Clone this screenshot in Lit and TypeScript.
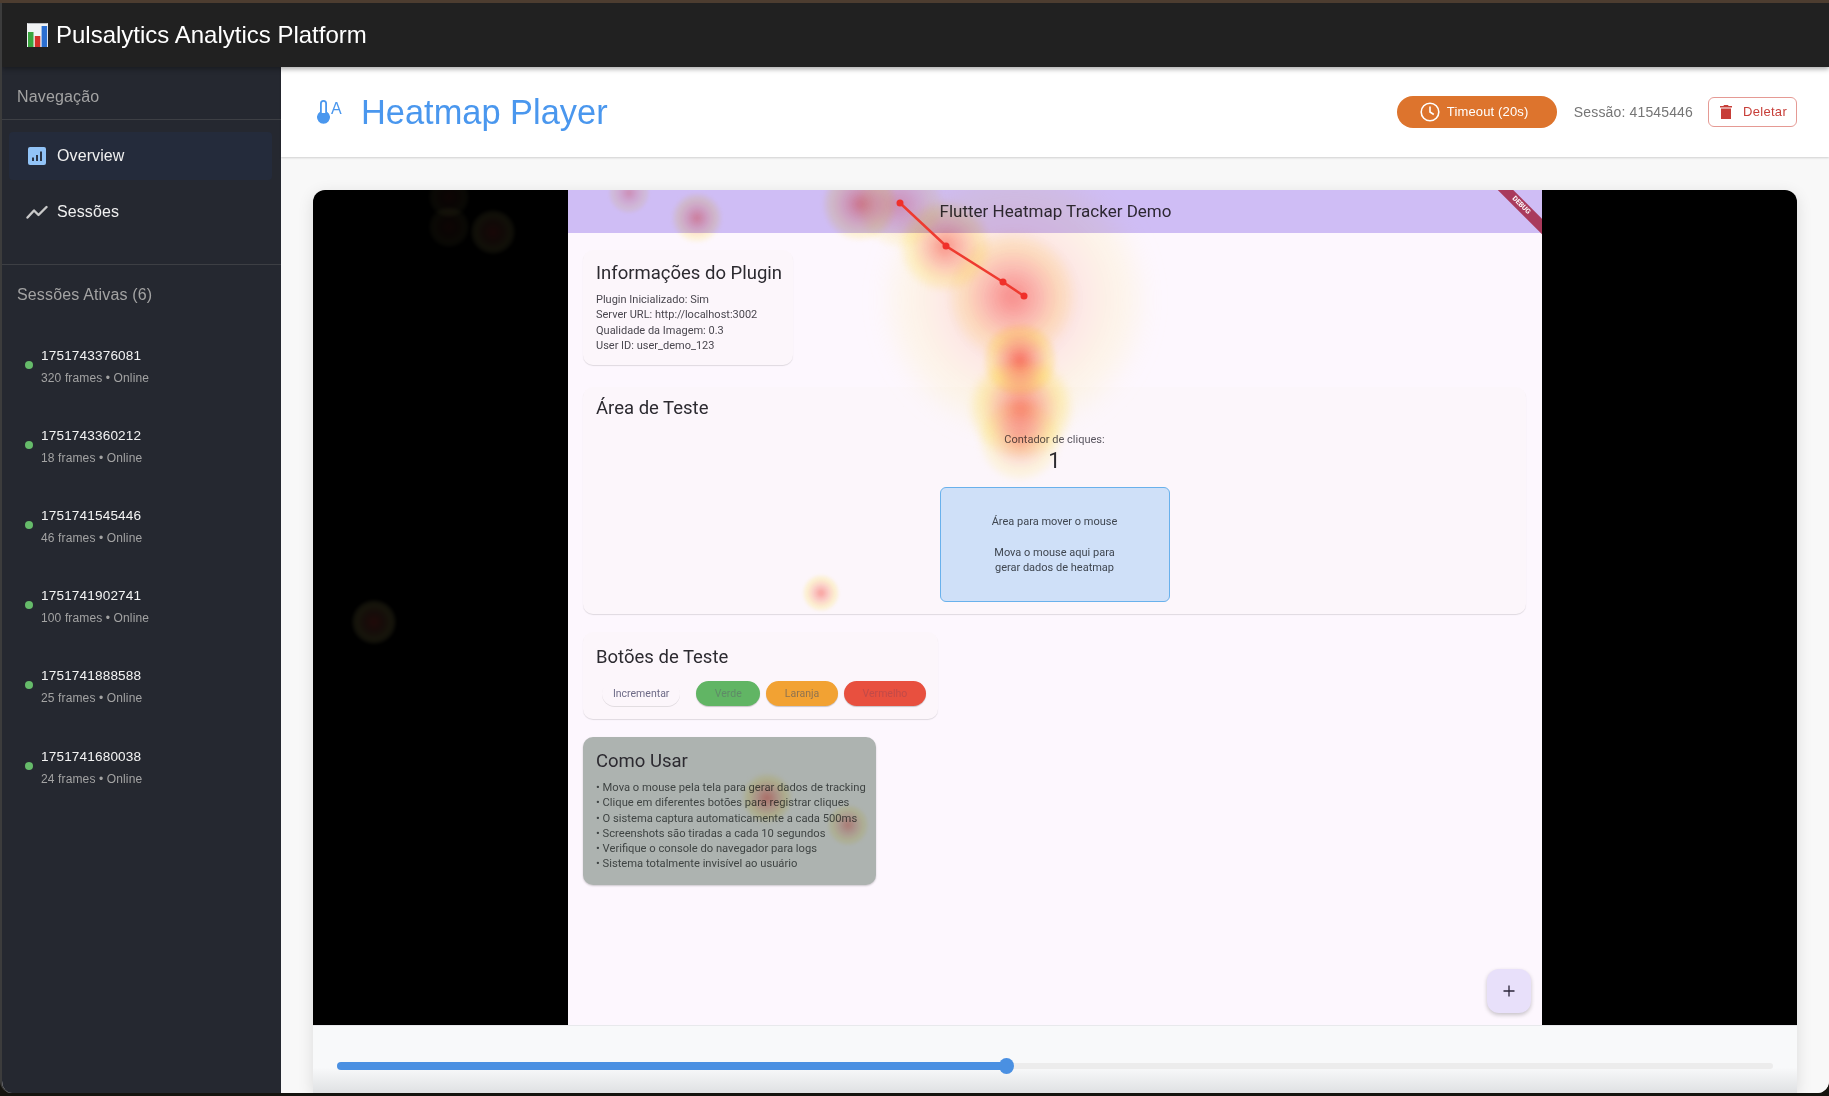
import { LitElement, css, html, svg } from "lit";
import { customElement } from "lit/decorators.js";

const SESSIONS = [
  { id: "1751743376081", frames: 320 },
  { id: "1751743360212", frames: 18 },
  { id: "1751741545446", frames: 46 },
  { id: "1751741902741", frames: 100 },
  { id: "1751741888588", frames: 25 },
  { id: "1751741680038", frames: 24 },
];

const HOW_TO = [
  "Mova o mouse pela tela para gerar dados de tracking",
  "Clique em diferentes botões para registrar cliques",
  "O sistema captura automaticamente a cada 500ms",
  "Screenshots são tiradas a cada 10 segundos",
  "Verifique o console do navegador para logs",
  "Sistema totalmente invisível ao usuário",
];

// heat spots, in page coordinates: x, y, radius, opacity
const SPOTS = [
  [449, 197, 20, 0.07],
  [449, 227, 20, 0.07],
  [493, 232, 22, 0.12],
  [374, 622, 22, 0.16],
  [629, 193, 20, 0.45],
  [697, 218, 24, 0.65],
  [860, 204, 36, 0.7],
  [900, 205, 42, 0.45],
  [945, 246, 44, 0.7],
  [1015, 300, 130, 0.32],
  [1012, 296, 62, 0.6],
  [1020, 360, 36, 0.9],
  [1021, 408, 50, 0.85],
  [1020, 440, 40, 0.45],
  [821, 593, 18, 0.65],
  [767, 798, 24, 0.75],
  [848, 825, 20, 0.6],
];

const ROUTE = [
  [900, 203],
  [946, 246],
  [1003, 282],
  [1024, 296],
];

const STAGE_X = 313;
const STAGE_Y = 190;
const FRAME_LEFT = 568;

@customElement("app-root")
export class AppRoot extends LitElement {
  static styles = css`
    :host {
      display: flex;
      flex-direction: column;
      width: 1829px;
      height: 1096px;
      background: #15140f;
      font-family: "Liberation Sans", Arial, sans-serif;
    }
    .top-strip {
      height: 3px;
      flex: none;
      background: #4d3d30;
    }
    .window {
      flex: none;
      height: 1090px;
      display: flex;
      flex-direction: column;
      overflow: hidden;
      border-radius: 0 0 12px 12px;
      border-left: 2px solid #3c3c3c;
      background: #f2f2f2;
    }
    .appbar {
      flex: none;
      height: 64px;
      display: flex;
      align-items: center;
      gap: 8px;
      padding-left: 25px;
      background: #212121;
      color: #fff;
      font-size: 24px;
      position: relative;
      z-index: 2;
      box-shadow: 0 2px 5px rgba(0, 0, 0, 0.35);
    }
    .shell {
      flex: 1;
      min-height: 0;
      display: flex;
    }
    .sidebar {
      flex: none;
      width: 279px;
      background: #252830;
      color: #fff;
    }
    .side-title {
      height: 53px;
      box-sizing: border-box;
      padding: 21px 0 0 15px;
      font-size: 16px;
      letter-spacing: 0.15px;
      line-height: 18px;
      color: #a3a3a3;
      border-bottom: 1px solid #3d3f44;
    }
    .nav {
      height: 145px;
      box-sizing: border-box;
      padding: 12px 9px 0 7px;
      border-bottom: 1px solid #3d3f44;
    }
    .nav-item {
      height: 48px;
      display: flex;
      align-items: center;
      gap: 9px;
      padding-left: 17px;
      border-radius: 4px;
      font-size: 16px;
      letter-spacing: 0.1px;
      color: #f0f0f0;
    }
    .nav-item.active {
      background: #242b3b;
      padding-left: 19px;
      gap: 11px;
    }
    .nav-gap {
      height: 8px;
    }
    .side-title.plain {
      border: 0;
      height: 61px;
    }
    .session {
      height: 80.2px;
      display: flex;
      align-items: center;
      gap: 8px;
      padding-left: 23px;
      box-sizing: border-box;
    }
    .dot {
      width: 8px;
      height: 8px;
      border-radius: 50%;
      background: #66bb6a;
      margin-top: -3px;
    }
    .session-id {
      font-size: 13.6px;
      letter-spacing: 0.15px;
      line-height: 16px;
      color: #f4f4f4;
      margin-bottom: 7px;
    }
    .session-meta {
      font-size: 12px;
      letter-spacing: 0.13px;
      line-height: 14px;
      color: #a3a3a3;
    }
    .main {
      flex: 1;
      min-width: 0;
      display: flex;
      flex-direction: column;
    }
    .page-head {
      flex: none;
      height: 90px;
      box-sizing: border-box;
      display: flex;
      align-items: center;
      padding: 0 32px 0 35px;
      background: #fff;
      box-shadow: 0 1px 2px rgba(0, 0, 0, 0.16);
      position: relative;
      z-index: 1;
    }
    .page-title {
      margin: 0 0 0 18px;
      font-size: 34.4px;
      font-weight: 400;
      color: #4a97ee;
      flex: 1;
    }
    .timeout {
      display: flex;
      align-items: center;
      gap: 7px;
      width: 160px;
      height: 32px;
      box-sizing: border-box;
      padding: 0 0 1px 23px;
      border-radius: 16px;
      background: #dd742d;
      color: #fff;
      font-size: 13px;
      letter-spacing: 0.15px;
    }
    .session-label {
      margin: 0 15px 0 17px;
      font-size: 14px;
      letter-spacing: 0.15px;
      color: #757575;
    }
    .delete {
      display: flex;
      align-items: center;
      gap: 11px;
      width: 89px;
      height: 30px;
      box-sizing: border-box;
      padding: 0 0 1px 11px;
      border: 1px solid #e59a94;
      border-radius: 6px;
      color: #c73e38;
      font-size: 13px;
      letter-spacing: 0.3px;
    }
    .content {
      flex: 1;
      min-height: 0;
      padding: 33px 32px 0;
      background: #f8f8f8;
    }
    .player {
      height: 100%;
      display: flex;
      flex-direction: column;
      border-radius: 12px 12px 0 0;
      overflow: hidden;
      box-shadow: 0 4px 16px rgba(0, 0, 0, 0.12);
    }
    .stage {
      flex: none;
      height: 835px;
      position: relative;
      display: flex;
      justify-content: center;
      overflow: hidden;
      background: #000;
    }
    .frame {
      width: 974px;
      display: flex;
      flex-direction: column;
      background: #fdf7fe;
      color: #2c2a30;
      font-family: Roboto, sans-serif;
      position: relative;
      overflow: hidden;
    }
    .frame-bar {
      flex: none;
      height: 43px;
      box-sizing: border-box;
      padding: 0 0 2px 1px;
      display: flex;
      align-items: center;
      justify-content: center;
      background: #cfbdf5;
      font-size: 17px;
      color: #2d2833;
    }
    .debug {
      position: absolute;
      top: 10px;
      right: -17px;
      width: 76px;
      height: 11px;
      background: #a93a5c;
      color: #fff;
      font-size: 7px;
      font-weight: 700;
      line-height: 11px;
      text-align: center;
      transform: rotate(45deg);
    }
    .frame-body {
      flex: 1;
      display: flex;
      flex-direction: column;
      align-items: flex-start;
      gap: 18px;
      padding: 17px 16px 0 15px;
      filter: blur(0.35px);
    }
    .card {
      box-sizing: border-box;
      padding: 12px 12px 12px 13px;
      border-radius: 10px;
      background: #fcf6fb;
      box-shadow: 0 1px 1px rgba(0, 0, 0, 0.12);
    }
    .card h2 {
      margin: 0;
      font-size: 18.5px;
      font-weight: 400;
      line-height: 22px;
      white-space: nowrap;
      color: #2c2a30;
    }
    .info {
      width: 210px;
      height: 115px;
      margin-bottom: 4px;
    }
    .rows {
      margin-top: 8px;
      font-size: 11px;
      line-height: 15.3px;
      color: #4a474f;
    }
    .test {
      align-self: stretch;
      height: 227px;
      padding-top: 10px;
      padding-left: 12px;
      display: flex;
      flex-direction: column;
    }
    .test h2 {
      padding-left: 1px;
    }
    .counter {
      display: flex;
      flex-direction: column;
      align-items: center;
      margin-top: 14px;
      font-size: 11px;
      line-height: 14px;
      color: #5a5660;
    }
    .count {
      font-size: 22px;
      line-height: 28px;
      color: #2c2a30;
    }
    .move-box {
      align-self: center;
      width: 230px;
      height: 115px;
      box-sizing: border-box;
      margin-top: 12px;
      display: flex;
      align-items: center;
      justify-content: center;
      text-align: center;
      border: 1px solid #69b1ec;
      border-radius: 6px;
      background: #cfe0f8;
      font-size: 11px;
      line-height: 15.3px;
      color: #3f4650;
    }
    .buttons {
      width: 355px;
      height: 87px;
      padding-top: 14px;
    }
    .button-row {
      display: flex;
      gap: 6px;
      margin-top: 13px;
      margin-left: 6px;
    }
    .pill {
      height: 25px;
      display: flex;
      align-items: center;
      justify-content: center;
      border-radius: 13px;
      font-size: 10.5px;
      box-shadow: 0 1px 1px rgba(0, 0, 0, 0.2);
    }
    .pill.light {
      width: 81px;
      margin-right: 10px;
      background: transparent;
      color: #6d6a86;
      box-shadow: 0 1px 0 rgba(0, 0, 0, 0.1);
    }
    .pill.green {
      width: 66px;
      background: #61b564;
      color: #5f8a68;
    }
    .pill.orange {
      width: 74px;
      background: #f2a233;
      color: #8f7350;
    }
    .pill.red {
      width: 85px;
      background: #e8503f;
      color: #c24a48;
    }
    .howto {
      width: 293px;
      height: 148px;
      padding-top: 13px;
      background: #adb3b0;
      box-shadow: 0 1px 2px rgba(0, 0, 0, 0.2);
    }
    .howto .rows {
      margin-top: 8px;
      font-size: 11.2px;
      white-space: nowrap;
      color: #3f4443;
    }
    .fab {
      position: absolute;
      right: 11px;
      bottom: 12px;
      width: 44px;
      height: 44px;
      display: flex;
      align-items: center;
      justify-content: center;
      border-radius: 12px;
      background: #e8e0fa;
      box-shadow: 0 2px 4px rgba(0, 0, 0, 0.22);
    }
    .heat {
      position: absolute;
      inset: 0;
      pointer-events: none;
    }
    .spot {
      position: absolute;
      border-radius: 50%;
      mix-blend-mode: multiply;
      background: radial-gradient(
        circle,
        rgba(248, 80, 70, 0.8) 0%,
        rgba(250, 140, 110, 0.55) 30%,
        rgba(255, 240, 130, 0.55) 55%,
        rgba(255, 225, 190, 0.14) 78%,
        rgba(255, 225, 190, 0) 100%
      );
    }
    .spot.on-black {
      mix-blend-mode: normal;
    }
    .route {
      position: absolute;
      inset: 0;
      width: 100%;
      height: 100%;
    }
    .controls {
      flex: 1;
      display: flex;
      align-items: flex-start;
      padding: 36px 24px 0;
      background: linear-gradient(#f8f9fa 62%, #dfe1e3);
      border-top: 1px solid #e8e9ec;
    }
    .track {
      flex: 1;
      height: 6px;
      margin-top: 1px;
      border-radius: 3px;
      background: #ececec;
      position: relative;
    }
    .fill {
      position: absolute;
      left: 0;
      top: -1px;
      height: 8px;
      border-radius: 4px;
      background: #4a90e2;
    }
    .thumb {
      position: absolute;
      top: -5px;
      width: 15px;
      height: 16px;
      margin-left: -7px;
      border-radius: 50%;
      background: #4a90e2;
    }
  `;

  private renderHeat() {
    return html`<div class="heat">
      ${SPOTS.map(
        ([x, y, r, o]) => html`<div
          class="spot ${x < FRAME_LEFT ? "on-black" : ""}"
          style="left:${x - STAGE_X - r}px;top:${y - STAGE_Y - r}px;width:${r * 2}px;height:${r * 2}px;opacity:${o};filter:blur(${r * 0.08}px)"
        ></div>`
      )}
      <svg class="route">
        <polyline
          points=${ROUTE.map(([x, y]) => `${x - STAGE_X},${y - STAGE_Y}`).join(" ")}
          fill="none"
          stroke="#ee3b30"
          stroke-width="2.5"
        />
        ${ROUTE.map(
          ([x, y]) => svg`<circle cx=${x - STAGE_X} cy=${y - STAGE_Y} r="3.5" fill="#f0302a" />`
        )}
      </svg>
    </div>`;
  }

  private renderFrame() {
    return html`<div class="frame">
      <div class="frame-bar">Flutter Heatmap Tracker Demo</div>
      <div class="debug">DEBUG</div>
      <div class="frame-body">
        <div class="card info">
          <h2>Informações do Plugin</h2>
          <div class="rows">
            <div>Plugin Inicializado: Sim</div>
            <div>Server URL: http://localhost:3002</div>
            <div>Qualidade da Imagem: 0.3</div>
            <div>User ID: user_demo_123</div>
          </div>
        </div>
        <div class="card test">
          <h2>Área de Teste</h2>
          <div class="counter">
            <span>Contador de cliques:</span>
            <span class="count">1</span>
          </div>
          <div class="move-box">
            <div>Área para mover o mouse<br /><br />Mova o mouse aqui para<br />gerar dados de heatmap</div>
          </div>
        </div>
        <div class="card buttons">
          <h2>Botões de Teste</h2>
          <div class="button-row">
            <div class="pill light">Incrementar</div>
            <div class="pill green">Verde</div>
            <div class="pill orange">Laranja</div>
            <div class="pill red">Vermelho</div>
          </div>
        </div>
        <div class="card howto">
          <h2>Como Usar</h2>
          <div class="rows">${HOW_TO.map((line) => html`<div>• ${line}</div>`)}</div>
        </div>
      </div>
      <div class="fab">
        <svg width="12" height="12" viewBox="0 0 12 12">
          <path d="M6 .5v11M.5 6h11" stroke="#2a2438" stroke-width="1.3" />
        </svg>
      </div>
    </div>`;
  }

  render() {
    const progress = 46.6;
    return html`
      <div class="top-strip"></div>
      <div class="window">
        <header class="appbar">
          <svg width="21" height="24" viewBox="0 0 21 24">
            <rect width="21" height="24" fill="#f1f3f4" />
            <rect x="0.5" y="0" width="20" height="1" fill="#b9bcc0" />
            <rect x="1" y="9" width="5.5" height="15" fill="#3aa53f" />
            <rect x="7.8" y="13" width="5.5" height="11" fill="#d3302a" />
            <rect x="14.6" y="3" width="5.5" height="21" fill="#2b6fd1" />
          </svg>
          <span>Pulsalytics Analytics Platform</span>
        </header>
        <div class="shell">
          <aside class="sidebar">
            <div class="side-title">Navegação</div>
            <nav class="nav">
              <div class="nav-item active">
                <svg width="18" height="18" viewBox="0 0 18 18">
                  <rect width="18" height="18" rx="2" fill="#91c3f7" />
                  <path d="M4 10.5h2v3.5H4zM8 8h2v6H8zM12 4.5h2V14h-2z" fill="#2a3446" />
                </svg>
                Overview
              </div>
              <div class="nav-gap"></div>
              <div class="nav-item">
                <svg width="22" height="14" viewBox="0 0 22 14">
                  <path
                    d="M1.5 12.5 8 5.5l4.5 4.5 8-8"
                    fill="none"
                    stroke="#c9c9c9"
                    stroke-width="2.4"
                    stroke-linecap="round"
                    stroke-linejoin="round"
                  />
                </svg>
                Sessões
              </div>
            </nav>
            <div class="side-title plain">Sessões Ativas (6)</div>
            ${SESSIONS.map(
              (s) => html`<div class="session">
                <span class="dot"></span>
                <div>
                  <div class="session-id">${s.id}</div>
                  <div class="session-meta">${s.frames} frames • Online</div>
                </div>
              </div>`
            )}
          </aside>
          <main class="main">
            <div class="page-head">
              <svg width="27" height="26" viewBox="0 0 27 26">
                <path
                  d="M4 4.5a3.5 3.5 0 0 1 7 0v8.2a6.5 6.5 0 1 1-7 0zM5.8 4.5v9.5h3.4V4.5a1.7 1.7 0 0 0-3.4 0z"
                  fill="#4a97ee"
                  fill-rule="evenodd"
                />
                <text x="15" y="14.5" font-size="16" fill="#4a97ee" font-family="Liberation Sans">A</text>
              </svg>
              <h1 class="page-title">Heatmap Player</h1>
              <div class="timeout">
                <svg width="20" height="20" viewBox="0 0 20 20">
                  <circle cx="10" cy="10" r="8.8" fill="none" stroke="#fff" stroke-width="1.6" />
                  <path d="M10 4.5V10l3.8 2.5" fill="none" stroke="#fff" stroke-width="1.6" />
                </svg>
                Timeout (20s)
              </div>
              <span class="session-label">Sessão: 41545446</span>
              <div class="delete">
                <svg width="12" height="14" viewBox="0 0 12 14">
                  <path d="M4 0h4l.6 1H12v1.6H0V1h3.4zM1 3.6h10V14H1z" fill="#c73e38" />
                </svg>
                Deletar
              </div>
            </div>
            <div class="content">
              <div class="player">
                <div class="stage">${this.renderFrame()} ${this.renderHeat()}</div>
                <div class="controls">
                  <div class="track">
                    <div class="fill" style="width:${progress}%"></div>
                    <div class="thumb" style="left:${progress}%"></div>
                  </div>
                </div>
              </div>
            </div>
          </main>
        </div>
      </div>
    `;
  }
}
